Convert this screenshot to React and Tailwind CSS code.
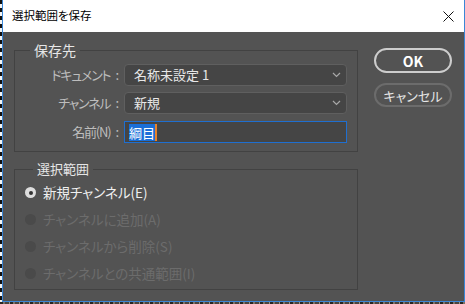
import React from 'react';

function Chevron() {
  return (
    <svg width="9" height="6" viewBox="0 0 9 6" className="shrink-0">
      <polyline points="1,1 4.5,4.5 8,1" fill="none" stroke="#a8a8a8" strokeWidth="1.2" />
    </svg>
  );
}

function Select({ value }) {
  return (
    <div className="w-[223px] h-[22px] flex items-center justify-between pl-[9px] pr-[5px] bg-[#454545] border border-[#5f5f5f] rounded-[4px] text-[13px] text-[#e8e8e8]">
      <span>{value}</span>
      <Chevron />
    </div>
  );
}

function Row({ label, children, className = '' }) {
  return (
    <div className={`flex items-center h-[22px] ${className}`}>
      <div className="w-[109px] pr-[5px] flex justify-end items-center text-[13px] text-[#bdbdbd] whitespace-nowrap">
        <span className="tracking-[-1.2px]">{label}</span>
        <span className="ml-[5px]">:</span>
      </div>
      {children}
    </div>
  );
}

function Radio({ label, checked }) {
  return (
    <div className="flex items-center h-[27px] pl-[10px]">
      {checked ? (
        <div className="w-[11px] h-[11px] rounded-full bg-[#dedede] flex items-center justify-center">
          <div className="w-[4px] h-[4px] rounded-full bg-[#333333]" />
        </div>
      ) : (
        <div className="w-[11px] h-[11px] rounded-full bg-[#4a4a4a]" />
      )}
      <span className={`ml-[7px] text-[13.5px] ${checked ? 'text-[#f0f0f0]' : 'text-[#6c6c6c]'}`}>{label}</span>
    </div>
  );
}

export default function App() {
  return (
    <div className="w-[465px] h-[304px] flex flex-col overflow-hidden bg-[#3c3732] font-['Noto_Sans_CJK_JP',sans-serif] [font-feature-settings:'palt']">
      <div className="flex flex-1 min-h-0">
        <div className="w-[2px] bg-[repeating-linear-gradient(to_bottom,#111_0_4px,#f4f4f4_4px_8px)]" />
        <div className="flex-1 flex flex-col border-x border-b border-[#3a86d6]">
          <div className="h-[32px] bg-white flex items-center justify-between pl-[9px] pr-[10px]">
            <span className="text-[11.5px] text-black leading-none">選択範囲を保存</span>
            <svg width="11" height="11" viewBox="0 0 11 11">
              <path d="M0.5 0.5 L10.5 10.5 M10.5 0.5 L0.5 10.5" stroke="#111" strokeWidth="1" />
            </svg>
          </div>
          <div className="flex-1 bg-[#535353] flex pl-[11px] pt-[8px]">
            <div className="w-[344px] flex flex-col">
              <fieldset className="border border-[#424242] pb-[8px]">
                <legend className="ml-[15px] px-[4px] text-[14px] leading-[20px] text-[#e6e6e6]">保存先</legend>
                <Row label="ドキュメント" className="mt-[4px]">
                  <Select value="名称未設定 1" />
                </Row>
                <Row label="チャンネル" className="mt-[6px]">
                  <Select value="新規" />
                </Row>
                <Row label="名前(N)" className="mt-[7px]">
                  <div className="w-[223px] h-[22px] flex items-center pl-[4px] bg-[#454545] border border-[#1f6fd0]">
                    <span className="bg-[#1a6fd8] text-white text-[13px] leading-[17px]">綱目</span>
                    <span className="w-[2px] h-[17px] bg-[#e8822a]" />
                  </div>
                </Row>
              </fieldset>
              <fieldset className="mt-[7px] border border-[#424242] pb-[2px]">
                <legend className="ml-[18px] px-[4px] text-[13px] leading-[20px] text-[#e6e6e6]">選択範囲</legend>
                <Radio label="新規チャンネル(E)" checked />
                <Radio label="チャンネルに追加(A)" />
                <Radio label="チャンネルから削除(S)" />
                <Radio label="チャンネルとの共通範囲(I)" />
              </fieldset>
            </div>
            <div className="ml-[16px] mt-[8px] flex flex-col">
              <div className="w-[78px] h-[25px] rounded-full border-2 border-[#cdcdcd] flex items-center justify-center text-[14px] font-bold text-white leading-none">OK</div>
              <div className="mt-[10px] w-[78px] h-[24px] rounded-full border-2 border-[#6c6c6c] flex items-center justify-center text-[13px] text-[#e6e6e6] leading-none">キャンセル</div>
            </div>
          </div>
        </div>
      </div>
      <div className="h-[2px] bg-[repeating-linear-gradient(to_right,#2a2622_0_3px,#7a7268_3px_5px,#4a443d_5px_9px,#9a9288_9px_10px)]" />
    </div>
  );
}
